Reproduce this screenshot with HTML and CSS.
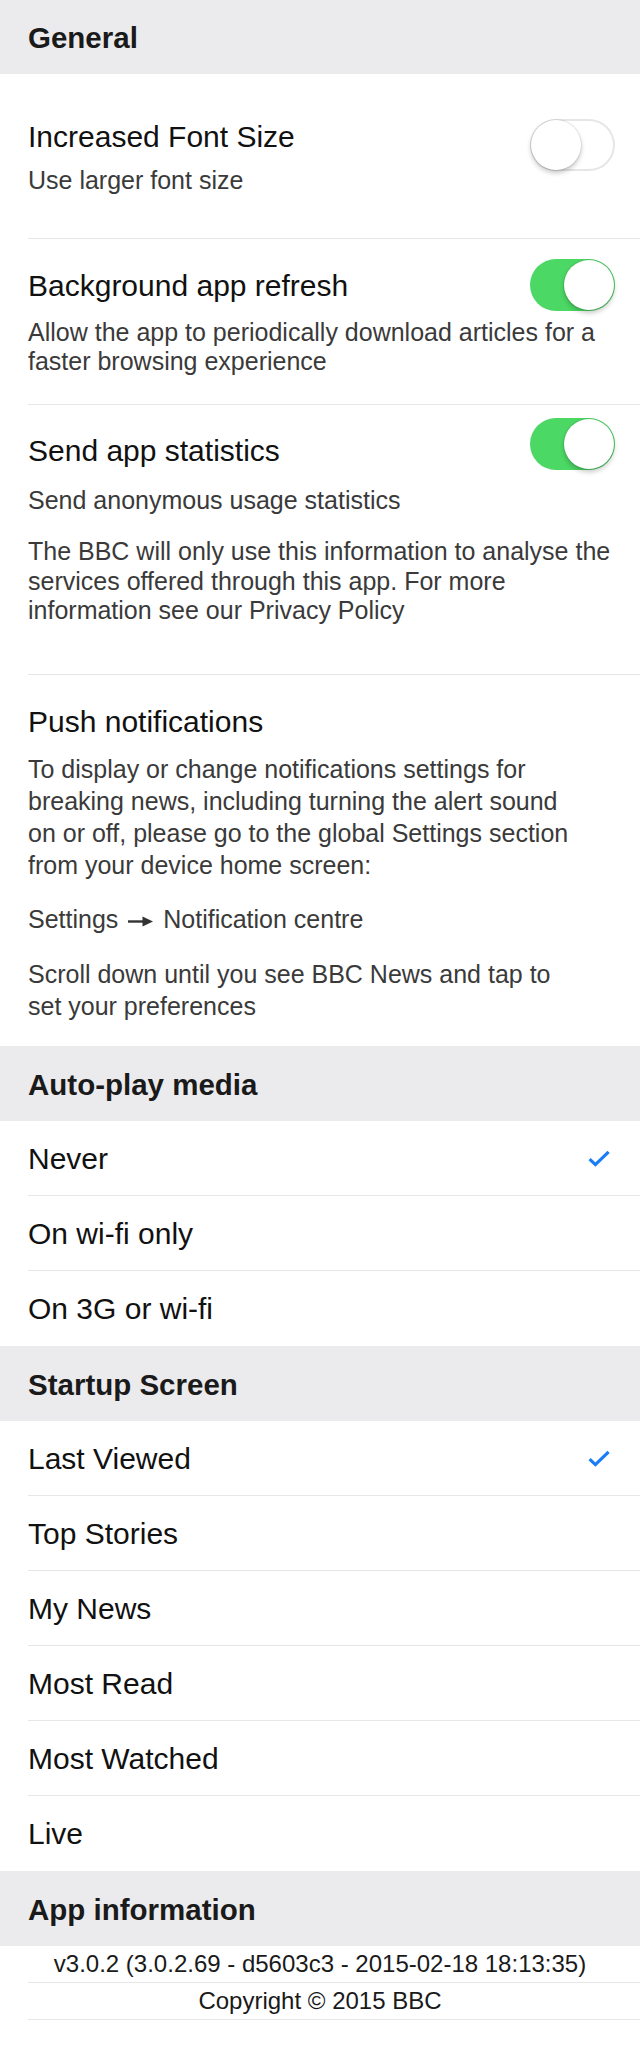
FILE: index.html
```html
<!DOCTYPE html>
<html lang="en">
<head>
<meta charset="utf-8">
<title>Settings</title>
<link rel="stylesheet" href="styles.css">
</head>
<body>
<main class="page">
  <section class="group">
    <h2 class="group-head group-head--first">General</h2>

    <div class="setting setting--font">
      <div class="setting-title">Increased Font Size</div>
      <span class="switch switch--off"><span class="knob"></span></span>
      <p class="setting-desc desc-sub">Use larger font size</p>
    </div>

    <div class="setting setting--refresh">
      <div class="setting-title">Background app refresh</div>
      <span class="switch switch--on"><span class="knob"></span></span>
      <p class="setting-desc desc-wrap">Allow the app to periodically download articles for a<br>faster browsing experience</p>
    </div>

    <div class="setting setting--stats">
      <div class="setting-title">Send app statistics</div>
      <span class="switch switch--on"><span class="knob"></span></span>
      <p class="setting-desc desc-sub">Send anonymous usage statistics</p>
      <p class="setting-desc desc-note">The BBC will only use this information to analyse the<br>services offered through this app. For more<br>information see our Privacy Policy</p>
    </div>

    <div class="push">
      <div class="setting-title">Push notifications</div>
      <p class="push-text push-text--intro">To display or change notifications settings for<br>breaking news, including turning the alert sound<br>on or off, please go to the global Settings section<br>from your device home screen:</p>
      <p class="push-text push-text--path">Settings <svg class="arrow" width="25" height="11" viewBox="0 0 25 11" aria-hidden="true"><rect x="0" y="4.3" width="16" height="2.4" fill="#333"/><polygon points="14.5,0.5 25,5.5 14.5,10.5" fill="#333"/></svg> Notification centre</p>
      <p class="push-text push-text--scroll">Scroll down until you see BBC News and tap to<br>set your preferences</p>
    </div>
  </section>

  <section class="group">
    <h2 class="group-head">Auto-play media</h2>
    <ul class="options">
      <li class="option"><span>Never</span><svg class="check" width="22" height="17" viewBox="0 0 22 17" aria-hidden="true"><path d="M1.6 9.2 L7.4 14.6 L20.6 1.8" fill="none" stroke="#1a7df8" stroke-width="3.2" stroke-linejoin="miter"/></svg></li>
      <li class="option"><span>On wi-fi only</span></li>
      <li class="option"><span>On 3G or wi-fi</span></li>
    </ul>
  </section>

  <section class="group">
    <h2 class="group-head">Startup Screen</h2>
    <ul class="options">
      <li class="option"><span>Last Viewed</span><svg class="check" width="22" height="17" viewBox="0 0 22 17" aria-hidden="true"><path d="M1.6 9.2 L7.4 14.6 L20.6 1.8" fill="none" stroke="#1a7df8" stroke-width="3.2" stroke-linejoin="miter"/></svg></li>
      <li class="option"><span>Top Stories</span></li>
      <li class="option"><span>My News</span></li>
      <li class="option"><span>Most Read</span></li>
      <li class="option"><span>Most Watched</span></li>
      <li class="option"><span>Live</span></li>
    </ul>
  </section>

  <section class="group">
    <h2 class="group-head">App information</h2>
    <div class="info-row">v3.0.2 (3.0.2.69 - d5603c3 - 2015-02-18 18:13:35)</div>
    <div class="info-row">Copyright © 2015 BBC</div>
  </section>
</main>
</body>
</html>
```

FILE: styles.css
```css
html, body {
  margin: 0;
  padding: 0;
  background: #ffffff;
}

body {
  font-family: "Liberation Sans", Arial, Helvetica, sans-serif;
  color: #000;
  width: 640px;
}

.page {
  display: block;
}

.group {
  margin: 0;
}

.group-head {
  margin: 0;
  box-sizing: border-box;
  height: 75px;
  padding: 21px 27px 0 28px;
  background: #ebebed;
  color: #1a1a1a;
  font-size: 29.5px;
  line-height: 36px;
  font-weight: 700;
}

.group-head--first {
  height: 74px;
  padding-top: 20px;
}

/* General settings rows */
.setting {
  display: grid;
  grid-template-columns: 1fr auto;
  margin-left: 28px;
  padding-right: 25px;
  border-bottom: 1px solid #e7e7e9;
}

.setting-title {
  grid-column: 1;
  grid-row: 1;
  font-size: 30px;
  line-height: 36px;
  color: #111111;
}

.switch {
  grid-column: 2;
  grid-row: 1 / span 2;
  align-self: start;
  display: flex;
  align-items: center;
  box-sizing: border-box;
  width: 85px;
  height: 52px;
  padding: 0 1px;
  border-radius: 26px;
}

.switch--off {
  background: #ffffff;
  box-shadow: inset 0 0 0 2px #e6e6e6;
}

.switch--on {
  justify-content: flex-end;
  background: #4cd864;
}

.knob {
  display: block;
  width: 50px;
  height: 50px;
  border-radius: 50%;
  background: #ffffff;
  box-shadow: 0 3px 5px rgba(0, 0, 0, 0.22), 0 0 0 1px rgba(0, 0, 0, 0.07);
}

.setting-desc {
  grid-column: 1 / -1;
  grid-row: 2;
  margin: 0 -14px 0 0;
  font-size: 25px;
  color: #3a3a3a;
}

.desc-sub {
  line-height: 30px;
}

.desc-wrap {
  line-height: 29px;
}

.desc-note {
  grid-row: 3;
  line-height: 29.5px;
  margin-top: 22px;
}

.setting--font {
  padding-top: 45px;
  padding-bottom: 43px;
}

.setting--font .desc-sub {
  margin-top: 10px;
}

.setting--refresh {
  padding-top: 20px;
  padding-bottom: 28px;
}

.setting--refresh .setting-title {
  margin-top: 9px;
}

.setting--refresh .desc-wrap {
  margin-top: 14px;
}

.setting--stats {
  padding-top: 13px;
  padding-bottom: 48px;
}

.setting--stats .setting-title {
  margin-top: 15px;
}

.setting--stats .desc-sub {
  margin-top: 16px;
}

/* Push notifications block */
.push {
  margin-left: 28px;
  padding: 29px 14px 24px 0;
}

.push-text {
  margin: 0;
  font-size: 25px;
  line-height: 32px;
  color: #3a3a3a;
}

.push-text--intro {
  margin-top: 13px;
}

.push-text--path {
  margin-top: 22px;
}

.push-text--scroll {
  margin-top: 23px;
}

.arrow {
  display: inline-block;
  vertical-align: 1px;
  margin: 0 3px;
}

/* Option lists */
.options {
  list-style: none;
  margin: 0;
  padding: 0;
}

.option {
  display: flex;
  align-items: center;
  justify-content: space-between;
  box-sizing: border-box;
  height: 75px;
  margin-left: 28px;
  padding: 20px 30px 18px 0;
  border-bottom: 1px solid #e7e7e9;
  font-size: 30px;
  line-height: 36px;
  color: #111111;
}

.option:last-child {
  border-bottom-color: transparent;
}

.check {
  display: block;
  margin-top: 0;
}

/* App information */
.info-row {
  box-sizing: border-box;
  height: 37px;
  margin-left: 28px;
  padding-right: 28px;
  border-bottom: 1px solid #e7e7e9;
  text-align: center;
  font-size: 24px;
  line-height: 36px;
  color: #1a1a1a;
}
```
